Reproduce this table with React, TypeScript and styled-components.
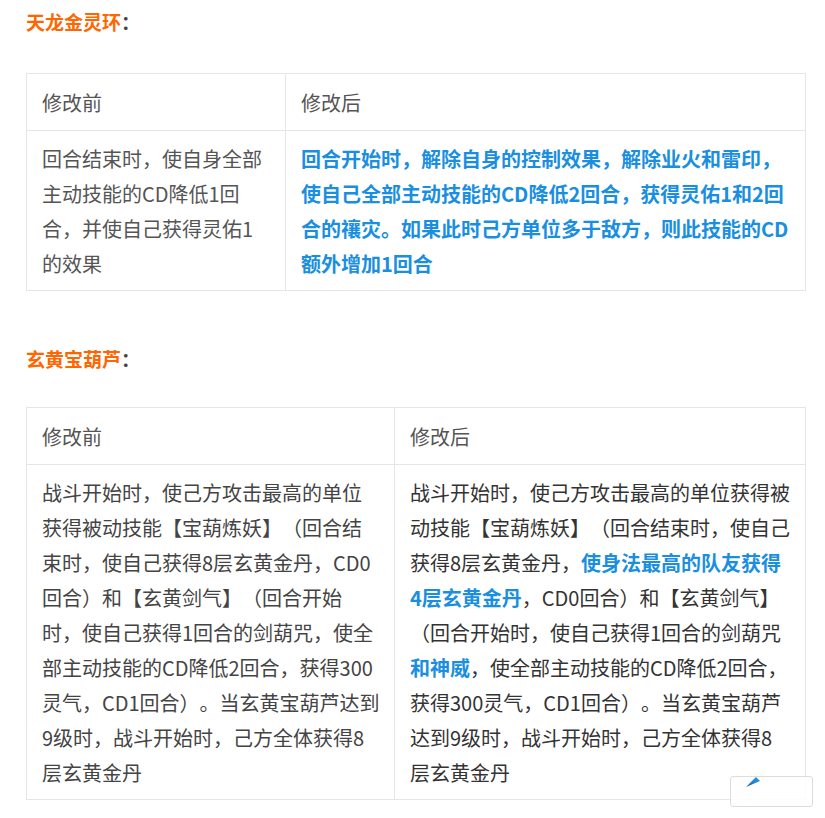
import styled, { createGlobalStyle } from 'styled-components';

const GlobalStyle = createGlobalStyle`
  html, body {
    margin: 0;
    padding: 0;
    background: #fff;
  }
  body {
    font-family: "Noto Sans CJK SC", "Noto Sans", sans-serif;
    text-spacing-trim: space-all;
  }
`;

const Page = styled.div`
  padding: 7px 19px 20px 26px;
  width: 780px;
`;

const Heading = styled.p<{ $top: number }>`
  margin: ${props => props.$top}px 0 0;
  font-size: 19px;
  line-height: 30px;
  font-weight: 700;
  color: #444;
`;

const Name = styled.span`
  color: #ff6600;
`;

const Table = styled.table<{ $gap: number }>`
  width: 780px;
  margin-top: ${props => props.$gap}px;
  border-collapse: collapse;
  table-layout: fixed;
  font-size: 20px;
  line-height: 35px;
`;

const HeadCell = styled.td`
  border: 1px solid #e6e6e6;
  padding: 11px 13px 10px 15px;
  color: #555;
  vertical-align: top;
`;

const Cell = styled.td<{ $tone?: string }>`
  border: 1px solid #e6e6e6;
  padding: 10px 13px 9px 15px;
  color: ${props => props.$tone || '#555'};
  vertical-align: top;
  text-spacing-trim: space-all;
`;

const Strong = styled.strong`
  color: #1a8fe0;
  font-weight: 700;
`;

const FloatBox = styled.div`
  position: fixed;
  right: 12px;
  bottom: 11px;
  width: 81px;
  height: 29px;
  border: 1px solid #dcdcdc;
  border-radius: 3px;
  background: rgba(255, 255, 255, 0.85);
`;

const Arrow = styled.svg`
  position: absolute;
  left: 14px;
  top: -1px;
`;

export default function App() {
  return (
    <>
      <GlobalStyle />
      <Page>
        <Heading $top={0}>
          <Name>天龙金灵环</Name>：
        </Heading>
        <Table $gap={36}>
          <colgroup>
            <col style={{ width: 259 }} />
            <col />
          </colgroup>
          <tbody>
            <tr>
              <HeadCell>修改前</HeadCell>
              <HeadCell>修改后</HeadCell>
            </tr>
            <tr>
              <Cell>回合结束时，使自身全部主动技能的CD降低1回合，并使自己获得灵佑1的效果</Cell>
              <Cell>
                <Strong>
                  回合开始时，解除自身的控制效果，解除业火和雷印，使自己全部主动技能的CD降低2回合，获得灵佑1和2回合的禳灾。如果此时己方单位多于敌方，则此技能的CD额外增加1回合
                </Strong>
              </Cell>
            </tr>
          </tbody>
        </Table>
        <Heading $top={53}>
          <Name>玄黄宝葫芦</Name>：
        </Heading>
        <Table $gap={33}>
          <colgroup>
            <col style={{ width: 368 }} />
            <col />
          </colgroup>
          <tbody>
            <tr>
              <HeadCell>修改前</HeadCell>
              <HeadCell>修改后</HeadCell>
            </tr>
            <tr>
              <Cell $tone="#444">
                战斗开始时，使己方攻击最高的单位获得被动技能【宝葫炼妖】（回合结束时，使自己获得8层玄黄金丹，CD0回合）和【玄黄剑气】（回合开始时，使自己获得1回合的剑葫咒，使全部主动技能的CD降低2回合，获得300灵气，CD1回合）。当玄黄宝葫芦达到9级时，战斗开始时，己方全体获得8层玄黄金丹
              </Cell>
              <Cell $tone="#333">
                战斗开始时，使己方攻击最高的单位获得被动技能【宝葫炼妖】（回合结束时，使自己获得8层玄黄金丹，
                <Strong>使身法最高的队友获得4层玄黄金丹</Strong>，CD0回合）和【玄黄剑气】（回合开始时，使自己获得1回合的剑葫咒
                <Strong>和神威</Strong>，使全部主动技能的CD降低2回合，获得300灵气，CD1回合）。当玄黄宝葫芦达到9级时，战斗开始时，己方全体获得8层玄黄金丹
              </Cell>
            </tr>
          </tbody>
        </Table>
      </Page>
      <FloatBox>
        <Arrow width="16" height="12" viewBox="0 0 16 12">
          <defs>
            <linearGradient id="arw" x1="0" y1="1" x2="1" y2="0">
              <stop offset="0" stopColor="#1560b0" />
              <stop offset="1" stopColor="#2aa0e8" />
            </linearGradient>
          </defs>
          <path d="M1 11 L11 1 L15 5 Z" fill="url(#arw)" />
        </Arrow>
      </FloatBox>
    </>
  );
}
